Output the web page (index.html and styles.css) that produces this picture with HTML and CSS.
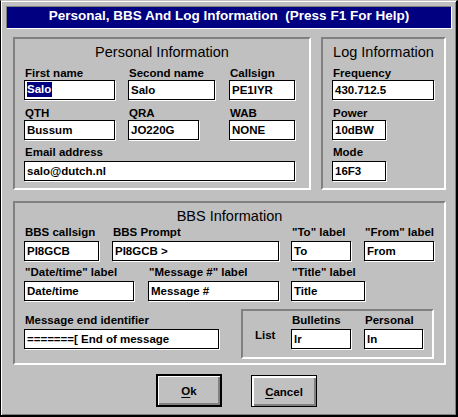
FILE: index.html
```html
<!DOCTYPE html>
<html>
<head>
<meta charset="utf-8">
<link rel="stylesheet" href="styles.css">
</head>
<body>
<div class="window">
  <div class="titlebar">Personal, BBS And Log Information&nbsp; (Press F1 For Help)</div>
  <div class="body">
    <div class="top">
      <section class="group personal">
        <div class="group-title">Personal Information</div>
        <div class="row row-a cols-p1">
          <div class="cell"><div class="lbl">First name</div><div class="field w91"><span class="sel">Salo</span></div></div>
          <div class="cell"><div class="lbl">Second name</div><div class="field w87">Salo</div></div>
          <div class="cell"><div class="lbl">Callsign</div><div class="field w66">PE1IYR</div></div>
        </div>
        <div class="row row-a cols-p1">
          <div class="cell"><div class="lbl">QTH</div><div class="field w91">Bussum</div></div>
          <div class="cell"><div class="lbl">QRA</div><div class="field w71">JO220G</div></div>
          <div class="cell"><div class="lbl">WAB</div><div class="field w66">NONE</div></div>
        </div>
        <div class="row row-b">
          <div class="cell"><div class="lbl">Email address</div><div class="field loose w271">salo@dutch.nl</div></div>
        </div>
      </section>
      <section class="group log">
        <div class="group-title">Log Information</div>
        <div class="row row-a">
          <div class="cell"><div class="lbl">Frequency</div><div class="field w102">430.712.5</div></div>
        </div>
        <div class="row row-a">
          <div class="cell"><div class="lbl">Power</div><div class="field w54">10dBW</div></div>
        </div>
        <div class="row row-b">
          <div class="cell"><div class="lbl">Mode</div><div class="field loose w54">16F3</div></div>
        </div>
      </section>
    </div>
    <section class="group bbs">
      <div class="group-title">BBS Information</div>
      <div class="row row-c cols-b1">
        <div class="cell"><div class="lbl">BBS callsign</div><div class="field loose w75">PI8GCB</div></div>
        <div class="cell"><div class="lbl">BBS Prompt</div><div class="field loose w167">PI8GCB &gt;</div></div>
        <div class="cell"><div class="lbl">"To" label</div><div class="field loose w60">To</div></div>
        <div class="cell"><div class="lbl">"From" label</div><div class="field loose w70">From</div></div>
      </div>
      <div class="row row-d cols-b2">
        <div class="cell"><div class="lbl">"Date/time" label</div><div class="field loose w110">Date/time</div></div>
        <div class="cell"><div class="lbl">"Message #" label</div><div class="field loose w131">Message #</div></div>
        <div class="cell"><div class="lbl">"Title" label</div><div class="field loose w74">Title</div></div>
      </div>
      <div class="row row-e cols-b3">
        <div class="cell end-cell"><div class="lbl">Message end identifier</div><div class="field loose w195">=======[ End of message</div></div>
        <div class="listgroup">
          <div class="list-lbl">List</div>
          <div class="cell list-cell"><div class="lbl">Bulletins</div><div class="field loose w60">lr</div></div>
          <div class="cell list-cell"><div class="lbl">Personal</div><div class="field loose w59">ln</div></div>
        </div>
      </div>
    </section>
    <div class="buttons">
      <div class="btn btn-default"><span><u>O</u>k</span></div>
      <div class="btn btn-cancel"><span><u>C</u>ancel</span></div>
    </div>
  </div>
</div>
</body>
</html>
```
FILE: styles.css
```css
* { box-sizing: border-box; }
html, body { margin: 0; padding: 0; }
body {
  background: #c0c0c0;
  font-family: "Liberation Sans", Arial, sans-serif;
  font-size: 11.5px;
  font-weight: bold;
  color: #000;
}
.window {
  width: 458px;
  height: 417px;
  background: #c0c0c0;
  border-style: solid;
  border-width: 1px 2px 2px 1px;
  border-color: #c0c0c0 #000 #000 #000;
  box-shadow: inset 1px 1px 0 #fff, inset -1px -1px 0 #808080;
  padding: 5px 4px 0 5px;
}
.titlebar {
  height: 23px;
  background: #000080;
  color: #fff;
  border-style: solid;
  border-width: 1px;
  border-color: #808080 #fff #fff #808080;
  font-size: 13.5px;
  line-height: 18px;
  text-align: center;
  white-space: nowrap;
}
.body { padding-left: 7px; }
.top {
  display: flex;
  gap: 10px;
  margin-top: 8px;
}
.group {
  border: 2px solid;
  border-color: #808080 #fff #fff #808080;
  padding-top: 5px;
}
.personal { width: 298px; height: 153px; }
.log { width: 125px; height: 153px; }
.bbs { width: 433px; height: 164px; margin-top: 11px; }
.group-title {
  font-weight: normal;
  font-size: 14.5px;
  line-height: 16px;
  text-align: center;
  white-space: nowrap;
}
.row { padding-left: 9px; display: grid; }
.row-a { margin-top: 6px; }
.row-b { margin-top: 5px; }
.row-c { margin-top: 1px; }
.row-d { margin-top: 4px; }
.row-e { margin-top: 8px; align-items: start; }
.cols-p1 { grid-template-columns: 104px 101px 66px; }
.cols-b1 { grid-template-columns: 88px 179px 73px 70px; }
.cols-b2 { grid-template-columns: 124px 143px 74px; }
.cols-b3 { grid-template-columns: 217px 193px; }
.lbl {
  line-height: 14px;
  padding-left: 1px;
  white-space: nowrap;
}
.field {
  height: 20px;
  background: #fff;
  border: 1px solid #000;
  box-shadow: 1px 1px 0 #fff;
  padding-left: 2px;
  line-height: 18px;
  white-space: nowrap;
  overflow: hidden;
}
.field.loose { margin-top: 2px; }
.sel {
  display: inline-block;
  vertical-align: top;
  margin-top: 1px;
  line-height: 15px;
  background: #000080;
  color: #fff;
  padding-right: 1px;
}
.w54 { width: 54px; }
.w59 { width: 59px; }
.w60 { width: 60px; }
.w66 { width: 66px; }
.w70 { width: 70px; }
.w71 { width: 71px; }
.w74 { width: 74px; }
.w75 { width: 75px; }
.w87 { width: 87px; }
.w91 { width: 91px; }
.w102 { width: 102px; }
.w110 { width: 110px; }
.w131 { width: 131px; }
.w167 { width: 167px; }
.w195 { width: 195px; }
.w271 { width: 271px; }
.end-cell { padding-top: 4px; }
.listgroup {
  height: 50px;
  border: 2px solid;
  border-color: #808080 #fff #fff #808080;
  padding-left: 12px;
  display: grid;
  grid-template-columns: 36px 73px 59px;
  align-items: start;
}
.list-lbl {
  padding-top: 17px;
  line-height: 14px;
}
.list-cell { padding-top: 2px; }
.buttons {
  display: flex;
  gap: 29px;
  margin-top: 9px;
  padding-left: 143px;
  align-items: flex-start;
}
.btn {
  width: 66px;
  height: 33px;
  background: #c0c0c0;
  display: flex;
  align-items: center;
  justify-content: center;
  padding-top: 1px;
  line-height: 14px;
}
.btn-default {
  border: 2px solid #000;
  box-shadow: inset 1px 1px 0 #fff, inset -2px -2px 0 #808080;
}
.btn-cancel {
  height: 32px;
  margin-top: 1px;
  border: 1px solid #000;
  box-shadow: inset 2px 2px 0 #fff, inset -2px -2px 0 #808080;
}
.btn u { text-underline-offset: 2px; }
```
